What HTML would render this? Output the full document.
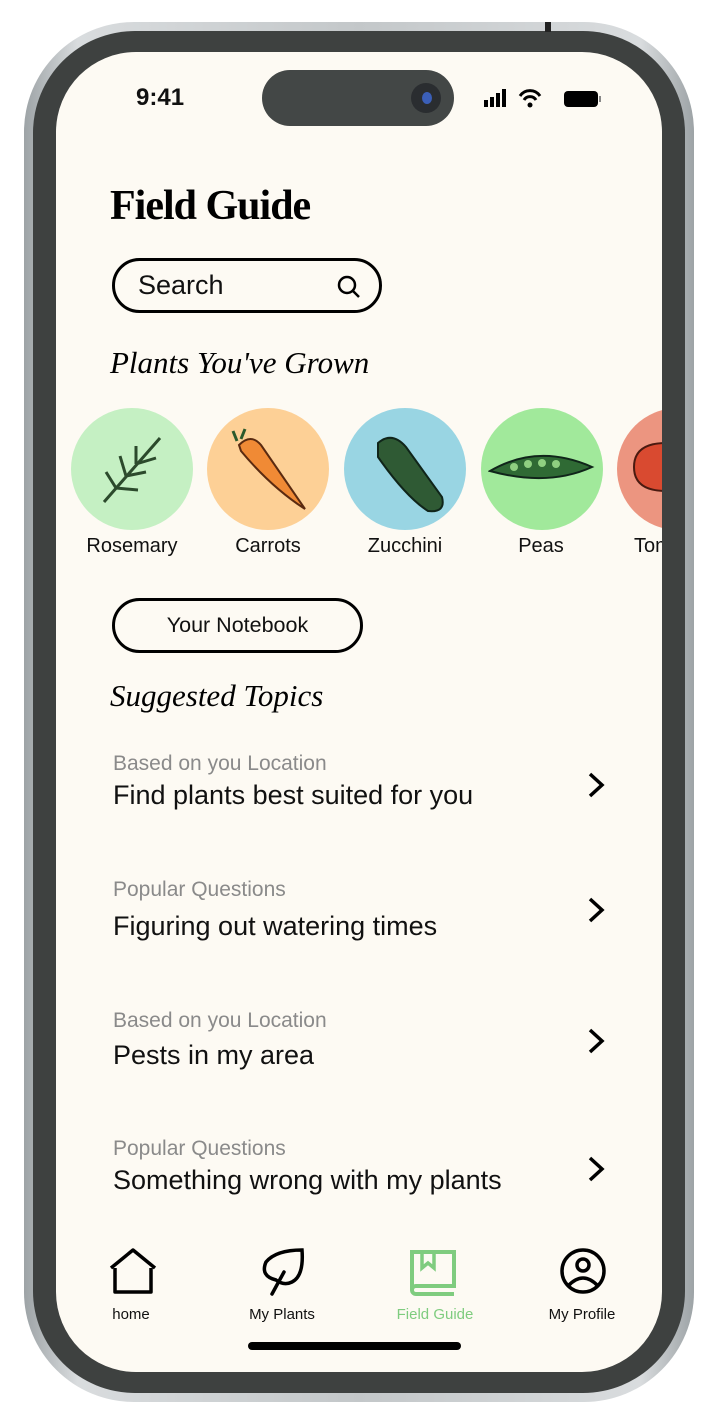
<!DOCTYPE html>
<html><head><meta charset="utf-8"><style>
*{margin:0;padding:0;box-sizing:border-box}
body{width:718px;height:1420px;background:#fff;position:relative;overflow:hidden;font-family:"Liberation Sans",sans-serif}
.a{position:absolute}
.frame{left:24px;top:22px;width:670px;height:1380px;border-radius:110px;background:linear-gradient(90deg,#9da3a6,#d9dcde 8%,#c3c7c9 50%,#d9dcde 92%,#9da3a6)}
.bezel{left:33px;top:31px;width:652px;height:1362px;border-radius:102px;background:#3e4140}
.screen{left:56px;top:52px;width:606px;height:1320px;border-radius:80px;background:#fdfaf3;overflow:hidden}
.circ{position:absolute;top:356px;width:122px;height:122px;border-radius:50%}
.lab{position:absolute;top:483px;font-size:20px;color:#111;text-align:center;width:140px}
.sub{position:absolute;left:57px;font-size:21px;color:#8a8a8a}
.main{position:absolute;left:57px;font-size:27px;color:#111}
.chev{position:absolute;left:528px}
.nav{position:absolute;top:1254px;font-size:15px;text-align:center;width:120px}
</style></head><body>
<div class="a frame"></div>
<div class="a bezel"></div>
<div class="a" style="left:545px;top:22px;width:6px;height:10px;background:#222"></div>
<div class="a screen">
 <div class="a" style="left:80px;top:32px;font-size:24px;font-weight:bold;color:#111">9:41</div>
 <div class="a" style="left:206px;top:18px;width:192px;height:56px;border-radius:28px;background:#434746"></div>
 <div class="a" style="left:355px;top:31px;width:30px;height:30px;border-radius:50%;background:#2a2d30"></div>
 <div class="a" style="left:366px;top:40px;width:10px;height:12px;border-radius:50%;background:#3b5fb8"></div>
 <svg class="a" style="left:428px;top:36px" width="124" height="22"><rect x="0" y="12" width="4" height="7" fill="#000"/><rect x="6" y="9" width="4" height="10" fill="#000"/><rect x="12" y="5" width="4" height="14" fill="#000"/><rect x="18" y="1" width="4" height="18" fill="#000"/><path d="M36 8a12 12 0 0 1 20 0M40 12a7 7 0 0 1 12 0" stroke="#000" stroke-width="3" fill="none"/><circle cx="46" cy="17" r="2.5"/><rect x="80" y="3" width="34" height="16" rx="4" fill="#000"/><rect x="115" y="8" width="2" height="6" fill="#888"/></svg>
 <div class="a" style="left:54px;top:130px;font-family:'Liberation Serif',serif;font-weight:bold;font-size:42px;letter-spacing:-1px;color:#000">Field Guide</div>
 <div class="a" style="left:56px;top:206px;width:270px;height:55px;border:3px solid #000;border-radius:28px"></div>
 <div class="a" style="left:82px;top:218px;font-size:27px;color:#111">Search</div>
 <svg class="a" style="left:280px;top:222px" width="26" height="26"><circle cx="11" cy="11" r="8" stroke="#000" stroke-width="2.5" fill="none"/><path d="M17 17l6 6" stroke="#000" stroke-width="2.5"/></svg>
 <div class="a" style="left:54px;top:293px;font-family:'Liberation Serif',serif;font-style:italic;font-size:31px;color:#000">Plants You've Grown</div>
 <div class="circ" style="left:15px;background:#c5f0c3"></div>
 <div class="circ" style="left:151px;background:#fdd096"></div>
 <div class="circ" style="left:288px;background:#99d5e3"></div>
 <div class="circ" style="left:425px;background:#a1e99b"></div>
 <div class="circ" style="left:561px;background:#ec9580"></div>
 <svg class="a" style="left:40px;top:378px" width="80" height="80"><path d="M8 72 L64 8 M20 58 l-10-16 M30 46 l-6-20 M40 34 l0-18 M30 46 l20 -4 M40 34 l20-6 M20 58 l22 2" stroke="#2c4a2c" stroke-width="3" fill="none"/></svg>
 <svg class="a" style="left:175px;top:375px" width="80" height="90"><path d="M8 18 Q20 6 30 18 L74 82 Q40 60 10 24Z" fill="#f08a35" stroke="#5a2a10" stroke-width="2"/><path d="M6 14l-4-10M10 12l4-10" stroke="#2c5a2c" stroke-width="3"/></svg>
 <svg class="a" style="left:310px;top:375px" width="80" height="90"><path d="M12 16 Q26 4 40 20 L76 70 Q80 86 62 84 Q40 70 12 30Z" fill="#2f5a34" stroke="#10251a" stroke-width="2"/></svg>
 <svg class="a" style="left:432px;top:395px" width="110" height="40"><path d="M2 24 Q50 -4 104 20 Q60 40 2 24Z" fill="#2f6a34" stroke="#10251a" stroke-width="2"/><g fill="#8fcf80"><circle cx="26" cy="20" r="4"/><circle cx="40" cy="17" r="4"/><circle cx="54" cy="16" r="4"/><circle cx="68" cy="17" r="4"/></g></svg>
 <svg class="a" style="left:574px;top:385px" width="40" height="60"><path d="M36 6 Q4 6 4 30 Q4 54 36 54Z" fill="#d94a30" stroke="#4a1a10" stroke-width="2"/></svg>
 <div class="lab" style="left:6px">Rosemary</div>
 <div class="lab" style="left:142px">Carrots</div>
 <div class="lab" style="left:279px">Zucchini</div>
 <div class="lab" style="left:415px">Peas</div>
 <div class="a" style="left:578px;top:483px;font-size:20px;color:#111;white-space:nowrap">Tomatoes</div>
 <div class="a" style="left:56px;top:546px;width:251px;height:55px;border:3px solid #000;border-radius:28px;text-align:center;line-height:49px;font-size:21.5px;color:#111">Your Notebook</div>
 <div class="a" style="left:54px;top:626px;font-family:'Liberation Serif',serif;font-style:italic;font-size:31px;color:#000">Suggested Topics</div>
 <div class="sub" style="top:700px">Based on you Location</div><div class="main" style="top:728px">Find plants best suited for you</div>
 <svg class="chev" style="top:718px" width="24" height="30"><path d="M6 4l12 11-12 11" stroke="#000" stroke-width="3.5" fill="none"/></svg>
 <div class="sub" style="top:826px">Popular Questions</div><div class="main" style="top:859px">Figuring out watering times</div>
 <svg class="chev" style="top:843px" width="24" height="30"><path d="M6 4l12 11-12 11" stroke="#000" stroke-width="3.5" fill="none"/></svg>
 <div class="sub" style="top:957px">Based on you Location</div><div class="main" style="top:988px">Pests in my area</div>
 <svg class="chev" style="top:974px" width="24" height="30"><path d="M6 4l12 11-12 11" stroke="#000" stroke-width="3.5" fill="none"/></svg>
 <div class="sub" style="top:1085px">Popular Questions</div><div class="main" style="top:1113px">Something wrong with my plants</div>
 <svg class="chev" style="top:1102px" width="24" height="30"><path d="M6 4l12 11-12 11" stroke="#000" stroke-width="3.5" fill="none"/></svg>
 <svg class="a" style="left:52px;top:1194px" width="50" height="50"><path d="M3 22L25 4l22 18M7 22v24h36V22" stroke="#000" stroke-width="3.5" fill="none" stroke-linejoin="round"/></svg>
 <svg class="a" style="left:200px;top:1194px" width="52" height="52"><path d="M20 34Q4 30 10 16Q20 4 46 4Q48 30 36 36Q28 40 20 34ZM28 26L16 48" stroke="#000" stroke-width="3.5" fill="none" stroke-linecap="round"/></svg>
 <svg class="a" style="left:352px;top:1194px" width="50" height="50"><path d="M4 44V6h42v34H8a4 4 0 0 0 0 8h38" stroke="#7fcc7f" stroke-width="4" fill="none"/><path d="M14 6v16l6-5 6 5V6" stroke="#7fcc7f" stroke-width="3.5" fill="none"/></svg>
 <svg class="a" style="left:502px;top:1194px" width="50" height="50"><circle cx="25" cy="25" r="21" stroke="#000" stroke-width="3.5" fill="none"/><circle cx="25" cy="19" r="6" stroke="#000" stroke-width="3.5" fill="none"/><path d="M10 40Q25 24 40 40" stroke="#000" stroke-width="3.5" fill="none"/></svg>
 <div class="nav" style="left:15px;color:#111">home</div>
 <div class="nav" style="left:166px;color:#111">My Plants</div>
 <div class="nav" style="left:319px;color:#7fcc7f">Field Guide</div>
 <div class="nav" style="left:466px;color:#111">My Profile</div>
 <div class="a" style="left:192px;top:1290px;width:213px;height:8px;border-radius:4px;background:#000"></div>
</div>
</body></html>
